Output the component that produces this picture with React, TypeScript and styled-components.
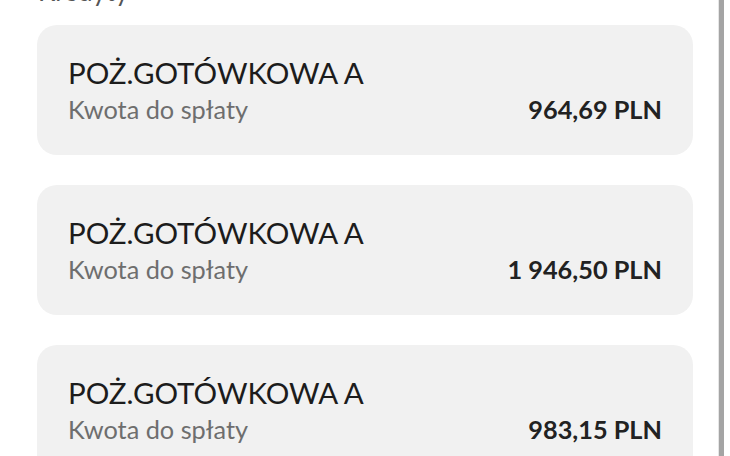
import React from 'react'
import styled, { createGlobalStyle } from 'styled-components'

const loans = [
    { key: 1, name: 'POŻ.GOTÓWKOWA A', amount: '964,69 PLN' },
    { key: 2, name: 'POŻ.GOTÓWKOWA A', amount: '1 946,50 PLN' },
    { key: 3, name: 'POŻ.GOTÓWKOWA A', amount: '983,15 PLN' },
]

const App = () => {
    return (
        <>
            <GlobalStyle />
            <Page>
                <Main>
                    <Heading>Kredyty</Heading>
                    <List>
                        {loans.map(loan => (
                            <Card key={loan.key}>
                                <Title>{loan.name}</Title>
                                <Row>
                                    <Label>Kwota do spłaty</Label>
                                    <Amount>{loan.amount}</Amount>
                                </Row>
                            </Card>
                        ))}
                    </List>
                </Main>
                <Scrollbar />
            </Page>
        </>
    )
}

export default App

const GlobalStyle = createGlobalStyle`
body{
    margin:0;
    background:#fff;
    font-family:Lato, "Open Sans", sans-serif;
}
`

const Page = styled.div`
    display:flex;
    height:456px;
    overflow:hidden;
`

const Main = styled.div`
    width:718px;
    padding:0 25px 0 37px;
    box-sizing:border-box;
`

const Heading = styled.h2`
    margin:-24px 0 18px 1px;
    font-size:26px;
    line-height:31px;
    font-weight:400;
    color:#555;
`

const List = styled.div`
    display:flex;
    flex-direction:column;
    gap:30px;
`

const Card = styled.div`
    height:130px;
    box-sizing:border-box;
    padding:30px 31px 0 31px;
    border-radius:20px;
    background:#f1f1f1;
    display:flex;
    flex-direction:column;
    gap:4px;
`

const Title = styled.div`
    font-size:29.5px;
    line-height:35px;
    color:#1c1c1c;
`

const Row = styled.div`
    display:flex;
    justify-content:space-between;
    align-items:baseline;
`

const Label = styled.span`
    font-size:25.3px;
    line-height:30px;
    color:#6e6e6e;
`

const Amount = styled.span`
    font-size:25.3px;
    line-height:30px;
    font-weight:700;
    color:#222;
`

const Scrollbar = styled.div`
    width:6px;
    background:#a4a4a4;
    border-left:1px solid #e6e6e6;
    box-sizing:border-box;
    flex-shrink:0;
`
